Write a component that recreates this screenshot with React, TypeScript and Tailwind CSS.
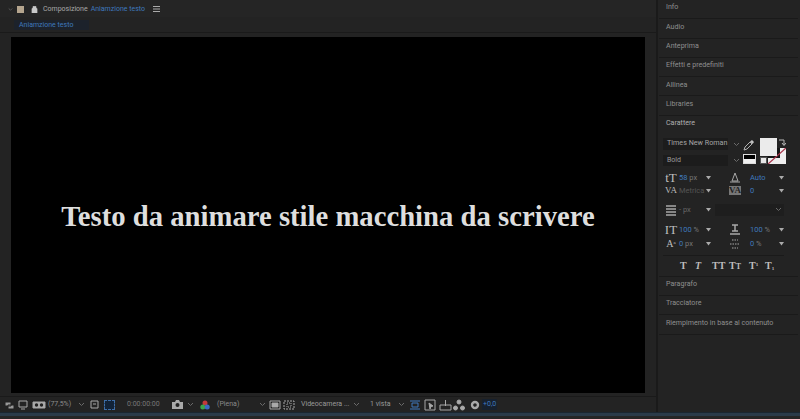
import { ReactNode } from 'react';

const sideTabsTop = ['Info', 'Audio', 'Anteprima', 'Effetti e predefiniti', 'Allinea', 'Libraries'];
const sideTabsBottom = ['Paragrafo', 'Tracciatore', 'Riempimento in base al contenuto'];

function Chevron({ className = '' }: { className?: string }) {
  return (
    <svg width="7" height="5" viewBox="0 0 7 5" className={`shrink-0 ${className}`}>
      <path d="M1 1l2.5 2.5L6 1" fill="none" stroke="#6a6a6a" strokeWidth="1" />
    </svg>
  );
}

function Tri() {
  return (
    <svg width="5" height="5" viewBox="0 0 5 5" className="shrink-0">
      <path d="M0 1h5L2.5 4.5z" fill="#aaa" />
    </svg>
  );
}

function Icon({ w = 12, children }: { w?: number; children: ReactNode }) {
  return (
    <svg width={w} height="12" viewBox={`0 0 ${w} 12`} className="shrink-0 block" fill="none" stroke="#a8a8a8" strokeWidth="1">
      {children}
    </svg>
  );
}

// one half of a character panel row: icon, value, dropdown arrow
function Field({ icon, children, width, pad = '' }: { icon: ReactNode; children: ReactNode; width: string; pad?: string }) {
  return (
    <div className={`flex items-center ${width}`}>
      <div className="w-[16px] shrink-0 flex justify-center">{icon}</div>
      <div className={`flex-1 text-[7.5px] text-[#3f78bd] whitespace-nowrap ${pad}`}>{children}</div>
      <Tri />
    </div>
  );
}

function Glyph({ children, className = '' }: { children: ReactNode; className?: string }) {
  return <span className={`font-['Liberation_Serif',serif] font-bold leading-none text-[#bdbdbd] ${className}`}>{children}</span>;
}

function CharacterPanel() {
  return (
    <div className="h-[143px] border-b border-[#1a1a1a] pl-[4px] pr-[14px] pt-[4px]">
      <div className="flex">
        <div className="w-[70px]">
          <div className="flex items-center h-[12px] bg-[#1c1c1c] pl-[4px] mr-[5px]">
            <span className="text-[7.2px] text-[#a5a5a5] whitespace-nowrap">Times New Roman</span>
          </div>
          <div className="flex items-center h-[11px] mt-[5px] bg-[#1c1c1c] pl-[4px] mr-[5px]">
            <span className="text-[7px] text-[#9a9a9a]">Bold</span>
          </div>
        </div>
        <div className="w-[9px] flex flex-col gap-[11px] pt-[4px]">
          <Chevron />
          <Chevron />
        </div>
        <div className="relative flex-1 h-[28px]">
          <svg width="12" height="12" viewBox="0 0 12 12" className="absolute left-[1px] top-[1px]">
            <path d="M1 11l1-3 5-5 2 2-5 5z" fill="none" stroke="#b0b0b0" />
            <path d="M7 2.5L9 1l2 2-1.5 2z" fill="#c4c4c4" />
          </svg>
          <div className="absolute left-[1px] top-[16px] w-[13px] h-[10px] border border-[#ddd] bg-[linear-gradient(#000_55%,#f0f0f0_55%)]" />
          <div className="absolute left-[26px] top-[10px] w-[18px] h-[16px] bg-[#efefef]">
            <div className="absolute left-0 top-0 w-[12px] h-[10px] bg-[#151515]" />
            <svg width="18" height="16" viewBox="0 0 18 16" className="absolute left-0 top-0">
              <path d="M0 16L18 0" stroke="#a8324a" strokeWidth="1.3" />
            </svg>
          </div>
          <div className="absolute left-[18px] top-0 w-[17px] h-[18px] bg-[#ebebeb]" />
          <div className="absolute left-[18px] top-[19px] w-[7px] h-[7px] border border-[#555] bg-[#e8e8e8]" />
          <svg width="8" height="8" viewBox="0 0 8 8" className="absolute left-[36px] top-[1px]">
            <path d="M1 1h5v5M4 4l2 2.5L8 4" fill="none" stroke="#bbb" />
          </svg>
        </div>
      </div>

      <div className="flex justify-between mt-[5px] h-[13px]">
        <Field width="w-[48px]" icon={<Glyph className="text-[13px] font-normal!">tT</Glyph>}>58 <span className="text-[#777]">px</span></Field>
        <Field width="w-[57px]" pad="pl-[7px]" icon={<Icon w={12}><path d="M6 2L3 10h6zM1 11h10" /></Icon>}>Auto</Field>
      </div>
      <div className="flex justify-between h-[13px]">
        <Field width="w-[48px]" icon={<Glyph className="text-[9px] font-normal!">VA</Glyph>}><span className="text-[#555]">Metrica</span></Field>
        <Field width="w-[57px]" pad="pl-[7px]" icon={<Glyph className="text-[9px] bg-[#777] text-[#222]!">VA</Glyph>}>0</Field>
      </div>

      <div className="flex items-center mt-[7px] h-[12px]">
        <div className="w-[16px] flex justify-center">
          <Icon w={10}><path d="M0 2h10M0 5h10M0 8h10M0 11h10" strokeWidth="1.5" /></Icon>
        </div>
        <span className="w-[27px] text-[7.5px] text-[#666]">- px</span>
        <Tri />
        <div className="ml-[4px] flex-1 h-[12px] bg-[#1e1e1e] flex items-center justify-end pr-[2px]">
          <Chevron />
        </div>
      </div>

      <div className="flex justify-between mt-[6px] h-[15px]">
        <Field width="w-[48px]" icon={<Glyph className="text-[13px] font-normal!">IT</Glyph>}>100 <span className="text-[#777]">%</span></Field>
        <Field width="w-[57px]" pad="pl-[7px]" icon={<Icon w={12}><path d="M3 2h6M6 2v6M3 8h6M1 11h10" strokeWidth="1.5" /></Icon>}>100 <span className="text-[#777]">%</span></Field>
      </div>
      <div className="flex justify-between h-[14px]">
        <Field width="w-[48px]" icon={<Glyph className="text-[10px] font-normal!">A<sup className="text-[5px]">a</sup></Glyph>}>0 <span className="text-[#777]">px</span></Field>
        <Field width="w-[57px]" pad="pl-[7px]" icon={<Icon w={12}><path d="M3 2h6M1 6h10M3 10h6" strokeDasharray="1.5 1" /></Icon>}>0 <span className="text-[#777]">%</span></Field>
      </div>

      <div className="border-t border-[#1a1a1a] mt-[4px] pt-[5px] pl-[17px] flex items-center h-[16px]">
        <Glyph className="w-[15px] text-[10px]">T</Glyph>
        <Glyph className="w-[17px] text-[10px] italic">T</Glyph>
        <Glyph className="w-[17px] text-[10px]">TT</Glyph>
        <Glyph className="w-[20px] text-[10px]">T<span className="text-[8px]">T</span></Glyph>
        <Glyph className="w-[16px] text-[10px]">T<sup className="text-[5px]">1</sup></Glyph>
        <Glyph className="text-[10px]">T<sub className="text-[5px]">1</sub></Glyph>
      </div>
    </div>
  );
}

function Toolbar() {
  return (
    <div className="h-[16px] border-t border-[#1a1a1a] flex items-center pl-[4px] text-[7px] text-[#8a8a8a] whitespace-nowrap">
      <Icon w={11}><path d="M1 3h6v4H1zM4 6h6v4H4z" fill="#999" stroke="#222" /></Icon>
      <span className="ml-[2px]"><Icon w={12}><path d="M2 2h8v6H2zM4 10h4" /></Icon></span>
      <span className="ml-[3px]"><Icon w={14}><path d="M1 3h12v6H1z" fill="#aaa" /><circle cx="4.5" cy="6" r="1.7" fill="#222" stroke="none" /><circle cx="9.5" cy="6" r="1.7" fill="#222" stroke="none" /></Icon></span>
      <span className="ml-[2px] w-[30px]">(77,5%)</span>
      <Chevron />
      <span className="ml-[4px]"><Icon w={11}><path d="M2 2h7v7H2z" /><path d="M4 5h3" /></Icon></span>
      <span className="ml-[4px] w-[11px] h-[10px] bg-[#122338] border border-dashed border-[#3d6ea8]" />
      <span className="ml-[12px] w-[45px] text-[#777]">0:00:00:00</span>
      <svg width="11" height="9" viewBox="0 0 11 9" className="shrink-0"><path d="M0 2h3l1-2h3l1 2h3v7H0z" fill="#aaa" /><circle cx="5.5" cy="5" r="2" fill="#222" /></svg>
      <span className="ml-[4px] w-[9px]"><Chevron className="block" /></span>
      <svg width="10" height="10" viewBox="0 0 10 10" className="ml-[4px] shrink-0">
        <circle cx="5" cy="3" r="2.5" fill="#c23a3a" />
        <circle cx="2.8" cy="7" r="2.5" fill="#3aa34a" />
        <circle cx="7.2" cy="7" r="2.5" fill="#3a6ac2" />
      </svg>
      <span className="ml-[7px] w-[42px]">(Piena)</span>
      <Chevron />
      <span className="ml-[3px]"><Icon w={12}><path d="M1 2h10v8H1z" /><path d="M3 4h6v4H3z" fill="#aaa" /></Icon></span>
      <span className="ml-[2px]"><Icon w={12}><path d="M1 2h10v8H1z" strokeDasharray="2 1" /><path d="M4 4h4v4H4z" strokeDasharray="1 1" /></Icon></span>
      <span className="ml-[6px] w-[52px] text-[#999]">Videocamera ...</span>
      <Chevron />
      <span className="ml-[10px] w-[28px] text-[#999]">1 vista</span>
      <Chevron />
      <span className="ml-[4px]"><Icon w={12}><path d="M1 2h10M1 10h10" stroke="#3f78bd" /><path d="M3 4h6v4H3z" stroke="#3f78bd" /></Icon></span>
      <span className="ml-[3px]"><Icon w={12}><path d="M1 1h10v10H1z" /><path d="M5 4l4 3-2 .5L6 10z" fill="#aaa" /></Icon></span>
      <span className="ml-[3px]"><Icon w={13}><path d="M1 6h11v5H1zM6.5 1v6" /></Icon></span>
      <span className="ml-[1px]"><Icon w={12}><circle cx="6" cy="3" r="2" fill="#aaa" /><circle cx="2.5" cy="9" r="2" fill="#aaa" /><circle cx="9.5" cy="9" r="2" fill="#aaa" /></Icon></span>
      <svg width="10" height="10" viewBox="0 0 10 10" className="ml-[5px] shrink-0"><circle cx="5" cy="5" r="3" fill="none" stroke="#aaa" strokeWidth="2.4" /></svg>
      <span className="ml-[2px] text-[#3f78bd] bg-[#17212e] px-[1px]">+0,0</span>
    </div>
  );
}

export default function App() {
  return (
    <div className="w-[800px] h-[419px] overflow-hidden flex flex-col bg-[#232323] font-['Roboto',sans-serif]">
      <div className="h-[412px] flex">
        <div className="w-[658px] shrink-0 flex flex-col border-r-2 border-[#1a1a1a]">
          <div className="h-[17px] flex items-center pl-[8px] pt-[1px] bg-[#252525] text-[7px]">
            <Chevron className="w-[5px]" />
            <span className="ml-[4px] w-[7px] h-[7px] bg-[#b5a58e]" />
            <svg width="7" height="8" viewBox="0 0 7 8" className="ml-[7px]"><path d="M1 3.5h5V8H1zM2 3.5V1.5h3v2" fill="#c8c8c8" stroke="#c8c8c8" strokeWidth=".7" /></svg>
            <span className="ml-[5px] text-[#a8a8a8]">Composizione</span>
            <span className="ml-[3px] text-[#3f78bd]">Aniamzione testo</span>
            <svg width="7" height="6" viewBox="0 0 7 6" className="ml-[8px]"><path d="M0 .5h7M0 3h7M0 5.5h7" stroke="#aaa" /></svg>
          </div>
          <div className="h-[16px] pl-[14px] flex items-center border-b border-[#1a1a1a]">
            <span className="w-[75px] h-[10px] pl-[5px] bg-[#1c222b] text-[7px] leading-[10px] text-[#3f78bd]">Aniamzione testo</span>
          </div>
          <div className="flex-1 pl-[11px] pr-[11px] pt-[4px]">
            <div className="h-[356px] bg-black flex items-center justify-center pt-[3px]">
              <span className="font-['Liberation_Serif',serif] font-bold text-[28.7px] text-[#dedede] whitespace-nowrap">
                Testo da animare stile macchina da scrivere
              </span>
            </div>
          </div>
          <Toolbar />
        </div>

        <div className="flex-1 pl-[1px] pr-[2px] text-[7.1px] text-[#8f8f8f]">
          {sideTabsTop.map((tab) => (
            <div key={tab} className="h-[19.3px] pl-[7px] pb-[3px] flex items-center border-b border-[#1a1a1a]">{tab}</div>
          ))}
          <div className="h-[18px] pl-[7px] pb-[3px] flex items-center text-[#b0b0b0]">Carattere</div>
          <CharacterPanel />
          {sideTabsBottom.map((tab) => (
            <div key={tab} className="h-[19.3px] pl-[7px] pb-[3px] flex items-center border-b border-[#1a1a1a]">{tab}</div>
          ))}
        </div>
      </div>
      <div className="h-[4px] bg-[#2b3b49] border-t border-[#1b2630]" />
      <div className="flex-1 bg-[#262626]" />
    </div>
  );
}
